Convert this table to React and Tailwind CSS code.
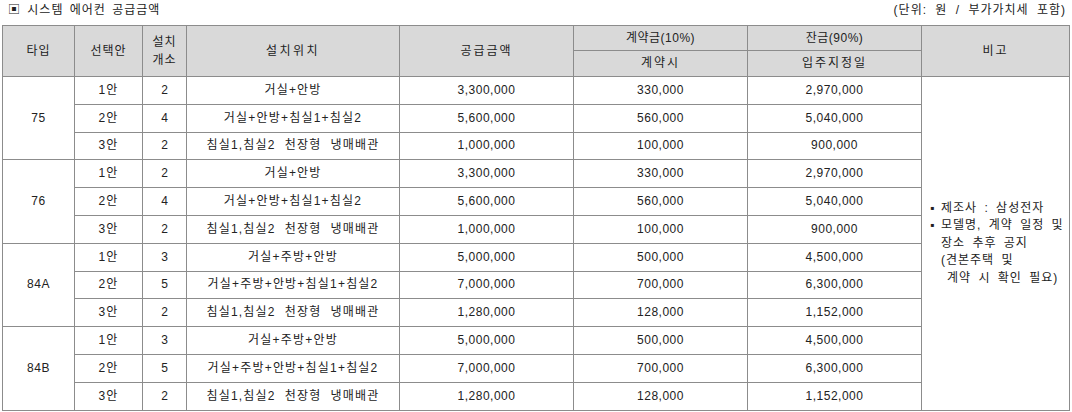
import React from "react";

const groups = [
  {
    type: "75",
    rows: [
      ["1안", "2", "거실+안방", "3,300,000", "330,000", "2,970,000"],
      ["2안", "4", "거실+안방+침실1+침실2", "5,600,000", "560,000", "5,040,000"],
      ["3안", "2", "침실1,침실2  천장형  냉매배관", "1,000,000", "100,000", "900,000"],
    ],
  },
  {
    type: "76",
    rows: [
      ["1안", "2", "거실+안방", "3,300,000", "330,000", "2,970,000"],
      ["2안", "4", "거실+안방+침실1+침실2", "5,600,000", "560,000", "5,040,000"],
      ["3안", "2", "침실1,침실2  천장형  냉매배관", "1,000,000", "100,000", "900,000"],
    ],
  },
  {
    type: "84A",
    rows: [
      ["1안", "3", "거실+주방+안방", "5,000,000", "500,000", "4,500,000"],
      ["2안", "5", "거실+주방+안방+침실1+침실2", "7,000,000", "700,000", "6,300,000"],
      ["3안", "2", "침실1,침실2  천장형  냉매배관", "1,280,000", "128,000", "1,152,000"],
    ],
  },
  {
    type: "84B",
    rows: [
      ["1안", "3", "거실+주방+안방", "5,000,000", "500,000", "4,500,000"],
      ["2안", "5", "거실+주방+안방+침실1+침실2", "7,000,000", "700,000", "6,300,000"],
      ["3안", "2", "침실1,침실2  천장형  냉매배관", "1,280,000", "128,000", "1,152,000"],
    ],
  },
];

const cell = "border border-[#8c8c8c] text-center align-middle p-0";
const head = "border border-[#8c8c8c] text-center align-middle p-0 bg-[#d9d9d9] font-normal";
const ko = " tracking-[1.2px] whitespace-pre";
const num = " tracking-[0.5px]";

const App = () => {
  return (
    <div
      className="w-[1072px] h-[412px] bg-white text-[#222] text-[12px] overflow-hidden"
      style={{ fontFamily: '"Liberation Sans", "Noto Sans CJK KR", sans-serif' }}
    >
      {/* title */}
      <div className="h-[25px] flex justify-between items-start pt-[2px] pl-[8px] pr-[6px] leading-[16px]">
        <span className="tracking-[1px] [word-spacing:2px]">▣ 시스템 에어컨 공급금액</span>
        <span className="tracking-[1px] [word-spacing:4px]">(단위: 원 / 부가가치세 포함)</span>
      </div>

      {/* table */}
      <table className="ml-[2px] w-[1067px] border-collapse table-fixed leading-[15px]">
        <colgroup>
          <col className="w-[72px]" />
          <col className="w-[68px]" />
          <col className="w-[44px]" />
          <col className="w-[213px]" />
          <col className="w-[174px]" />
          <col className="w-[174px]" />
          <col className="w-[174px]" />
          <col className="w-[148px]" />
        </colgroup>
        <thead>
          <tr className="h-[25px]">
            <th rowSpan={2} className={head + " tracking-[1px]"}>타입</th>
            <th rowSpan={2} className={head + " tracking-[1px]"}>선택안</th>
            <th rowSpan={2} className={head + " tracking-[1px] leading-[18px]"}>
              설치
              <br />
              개소
            </th>
            <th rowSpan={2} className={head + " tracking-[2.5px]"}>설치위치</th>
            <th rowSpan={2} className={head + " tracking-[2px]"}>공급금액</th>
            <th className={head + " tracking-[0.5px]"}>계약금(10%)</th>
            <th className={head + " tracking-[0.5px]"}>잔금(90%)</th>
            <th rowSpan={2} className={head + " tracking-[2px]"}>비고</th>
          </tr>
          <tr className="h-[26px]">
            <th className={head + " tracking-[2px]"}>계약시</th>
            <th className={head + " tracking-[2px]"}>입주지정일</th>
          </tr>
        </thead>
        <tbody>
          {groups.map((g, gi) =>
            g.rows.map((r, ri) => (
              <tr key={g.type + ri} className="h-[27.8px]">
                {ri === 0 && (
                  <td rowSpan={3} className={cell + num}>{g.type}</td>
                )}
                <td className={cell + ko}>{r[0]}</td>
                <td className={cell}>{r[1]}</td>
                <td className={cell + ko}>{r[2]}</td>
                <td className={cell + num}>{r[3]}</td>
                <td className={cell + num}>{r[4]}</td>
                <td className={cell + num}>{r[5]}</td>
                {gi === 0 && ri === 0 && (
                  <td rowSpan={12} className={cell + " text-left"}>
                    <div className="pl-[8px] leading-[17.5px] tracking-[1px] [word-spacing:3px] whitespace-pre">
                      <div className="flex">
                        <span className="w-[11px] shrink-0 tracking-normal">▪</span>
                        <span>제조사 : 삼성전자</span>
                      </div>
                      <div className="flex">
                        <span className="w-[11px] shrink-0 tracking-normal">▪</span>
                        <span>모델명, 계약 일정 및</span>
                      </div>
                      <div className="pl-[11px]">장소 추후 공지</div>
                      <div className="pl-[11px]">(견본주택 및</div>
                      <div className="pl-[17px]">계약 시 확인 필요)</div>
                    </div>
                  </td>
                )}
              </tr>
            ))
          )}
        </tbody>
      </table>
    </div>
  );
};

export default App;
